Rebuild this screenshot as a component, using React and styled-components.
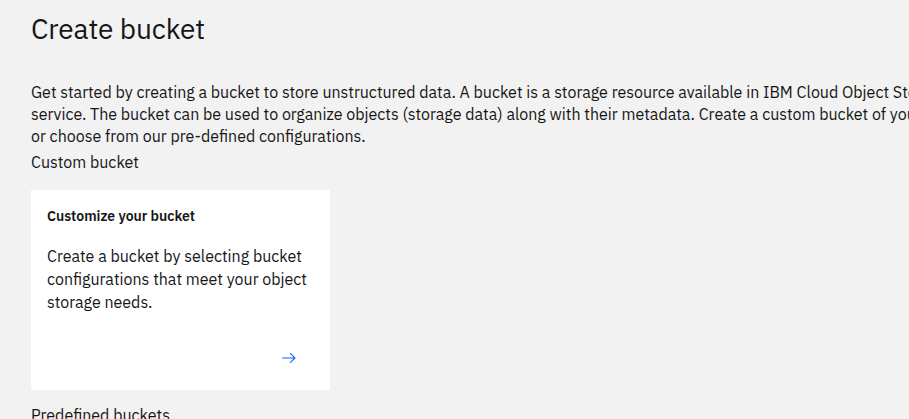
import React from "react";
import styled, { createGlobalStyle } from "styled-components";

const Global = createGlobalStyle`
  html, body { margin: 0; padding: 0; background: #f2f2f2; overflow: hidden; }
  body { font-family: "IBM Plex Sans", Roboto, "Liberation Sans", sans-serif; color: #161616; }
`;

const Page = styled.main`
  padding: 12px 32px 0 31px;
  display: flex;
  flex-direction: column;
  align-items: flex-start;
`;

const Title = styled.h1`
  margin: 0;
  font-size: 28px;
  font-weight: 400;
  line-height: 34px;
  letter-spacing: -0.1px;
`;

const Intro = styled.p`
  margin: 35px 0 0;
  font-size: 16px;
  line-height: 22px;
  white-space: nowrap;
`;

const SectionLabel = styled.div`
  font-size: 16px;
  line-height: 22px;
  margin-top: ${(p) => p.$mt || 0}px;
`;

const Card = styled.a`
  margin-top: 17px;
  width: 299px;
  height: 200px;
  box-sizing: border-box;
  background: #ffffff;
  padding: 17px 16px 23px;
  display: flex;
  flex-direction: column;
  text-decoration: none;
  color: #161616;
`;

const CardTitle = styled.div`
  font-size: 14px;
  font-weight: 600;
  line-height: 18px;
`;

const CardText = styled.div`
  margin-top: 20px;
  font-size: 16px;
  line-height: 23px;
`;

const ArrowRow = styled.div`
  margin-top: auto;
  display: flex;
  justify-content: flex-end;
  padding-right: 16px;
  color: #0f62fe;
  line-height: 0;
`;

export default function App() {
  return (
    <>
      <Global />
      <Page>
        <Title>Create bucket</Title>
        <Intro>
          Get started by creating a bucket to store unstructured data. A bucket is a storage resource available in IBM Cloud Object Storage
          <br />
          service. The bucket can be used to organize objects (storage data) along with their metadata. Create a custom bucket of your choice,
          <br />
          or choose from our pre-defined configurations.
        </Intro>
        <SectionLabel $mt={4}>Custom bucket</SectionLabel>
        <Card href="#">
          <CardTitle>Customize your bucket</CardTitle>
          <CardText>
            Create a bucket by selecting bucket configurations that meet your object storage needs.
          </CardText>
          <ArrowRow>
            <svg width="18" height="18" viewBox="0 0 16 16" fill="currentColor" aria-hidden="true">
              <path d="M9.3 3.3 8.6 4l3.5 3.5H2v1h10.1L8.6 12l.7.7L14 8z" />
            </svg>
          </ArrowRow>
        </Card>
        <SectionLabel $mt={14}>Predefined buckets</SectionLabel>
      </Page>
    </>
  );
}
